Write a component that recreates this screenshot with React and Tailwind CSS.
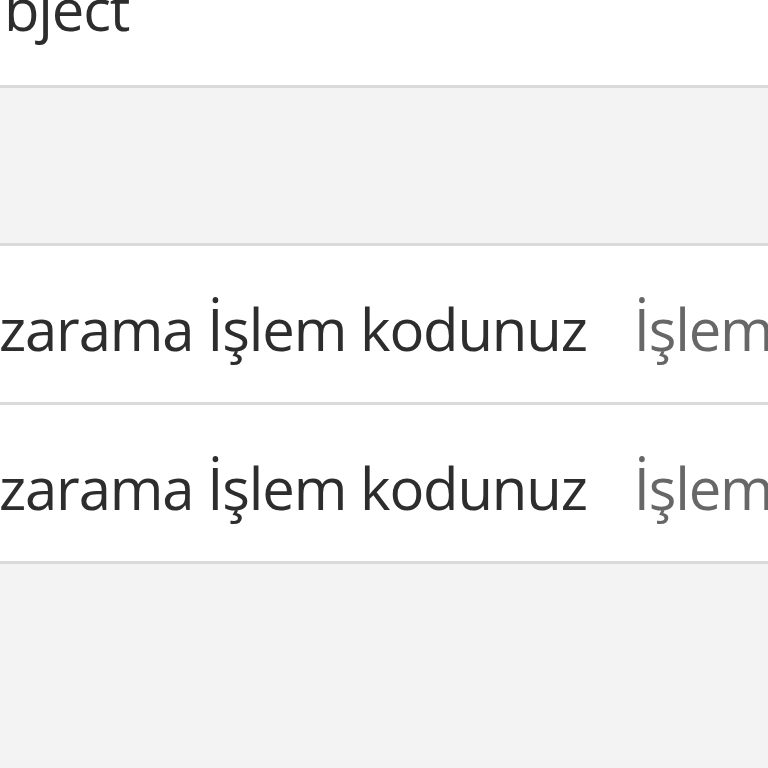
import React from 'react';

const rows = [
    { subject: 'zarama İşlem kodunuz', preview: 'İşlem kodunuz: 482913 Bu kodu kimseyle paylaşmayın.' },
    { subject: 'zarama İşlem kodunuz', preview: 'İşlem kodunuz: 775102 Bu kodu kimseyle paylaşmayın.' },
];

export default function App() {
    return (
        <div
            className="w-[768px] h-[768px] overflow-hidden bg-[#f3f3f3] text-[#2d2d2d]"
            style={{ fontFamily: '"Open Sans", "Noto Sans", sans-serif' }}
        >
            <div className="h-[85px] bg-white overflow-hidden">
                <div className="text-[58px] leading-none -mt-[20px] ml-[4px] whitespace-nowrap tracking-[-0.02em]">bject</div>
            </div>
            <div className="h-[3px] bg-[#dadada]" />
            <div className="h-[155px] bg-[#f3f3f3]" />
            <div className="h-[3px] bg-[#dadada]" />
            {rows.map((r, i) => (
                <div key={i}>
                    <div className="h-[156px] bg-white flex items-center overflow-hidden whitespace-nowrap">
                        <span className="text-[58px] leading-none ml-[-1px] pt-[9px] tracking-[-0.02em]">{r.subject}</span>
                        <span className="text-[58px] leading-none ml-[47px] pt-[9px] tracking-[-0.02em] text-[#676767]">{r.preview}</span>
                    </div>
                    <div className="h-[3px] bg-[#dadada]" />
                </div>
            ))}
        </div>
    );
}
